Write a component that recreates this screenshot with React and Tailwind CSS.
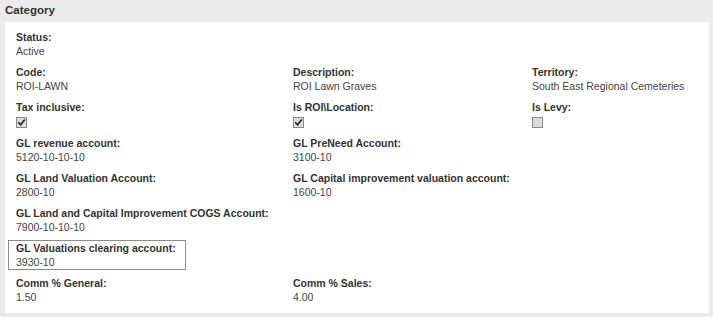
import React from 'react'

function Check({ checked }) {
  return (
    <span className="mt-[3px] flex h-[11px] w-[11px] items-center justify-center border border-[#8a8a8a] bg-[#dcdcdc]">
      {checked && (
        <svg width="9" height="9" viewBox="0 0 9 9">
          <path d="M1.2 4.2 L3.6 6.8 L7.8 1.6" fill="none" stroke="#222" strokeWidth="1.6" />
        </svg>
      )}
    </span>
  )
}

function Field({ label, value, check, boxed }) {
  return (
    <div className={boxed ? '-my-[1px] -ml-[8px] w-[178px] border border-[#8c8c8c] px-[7px]' : ''}>
      <div className="whitespace-nowrap text-[10.5px] leading-[14px] font-bold text-[#333]">{label}</div>
      {check !== undefined ? (
        <div className="h-[12px]"><Check checked={check} /></div>
      ) : (
        <div className="whitespace-nowrap text-[10.5px] leading-[14px] text-[#444]">{value}</div>
      )}
    </div>
  )
}

const rows = [
  [{ label: 'Status:', value: 'Active' }],
  [
    { label: 'Code:', value: 'ROI-LAWN' },
    { label: 'Description:', value: 'ROI Lawn Graves' },
    { label: 'Territory:', value: 'South East Regional Cemeteries' },
  ],
  [
    { label: 'Tax inclusive:', check: true },
    { label: 'Is ROI\\Location:', check: true },
    { label: 'Is Levy:', check: false },
  ],
  [
    { label: 'GL revenue account:', value: '5120-10-10-10' },
    { label: 'GL PreNeed Account:', value: '3100-10' },
  ],
  [
    { label: 'GL Land Valuation Account:', value: '2800-10' },
    { label: 'GL Capital improvement valuation account:', value: '1600-10' },
  ],
  [{ label: 'GL Land and Capital Improvement COGS Account:', value: '7900-10-10-10' }],
  [{ label: 'GL Valuations clearing account:', value: '3930-10', boxed: true }],
  [
    { label: 'Comm % General:', value: '1.50' },
    { label: 'Comm % Sales:', value: '4.00' },
  ],
]

export default function App() {
  return (
    <div className="flex h-[317px] w-[713px] flex-col bg-[#ebebeb] pl-[5px] pr-[4px] pb-[4px] font-['Liberation_Sans',Arial,sans-serif]">
      {/* Title bar */}
      <div className="flex h-[22px] shrink-0 items-center text-[11.5px] font-bold text-[#333]">
        Category
      </div>

      <div className="flex flex-1 flex-col gap-[7px] bg-white pl-[11px] pt-[8px]">
        {rows.map((row, i) => (
          <div key={i} className="grid grid-cols-[277px_239px_1fr]">
            {row.map((f) => (
              <Field key={f.label} {...f} />
            ))}
          </div>
        ))}
      </div>
    </div>
  )
}
